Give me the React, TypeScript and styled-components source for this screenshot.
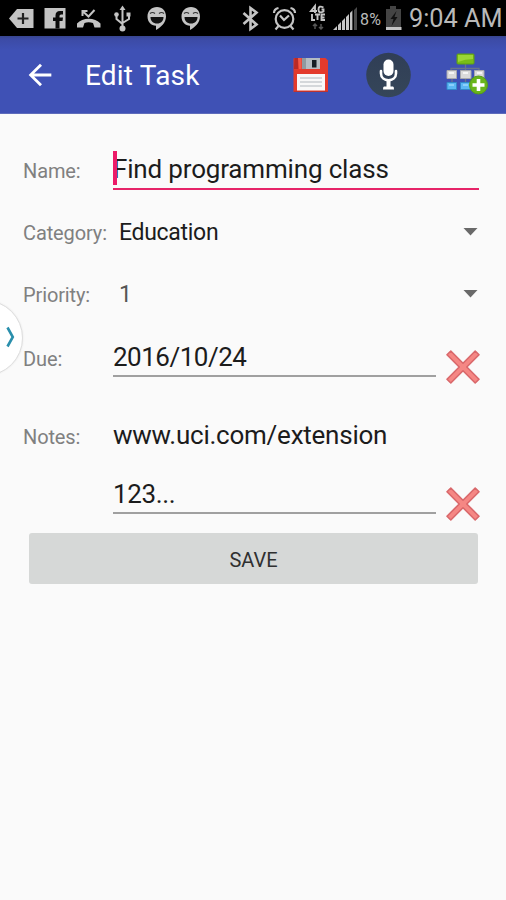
import React from "react";
import styled, { createGlobalStyle } from "styled-components";

const GlobalStyle = createGlobalStyle`
  * { box-sizing: border-box; }
  body { margin: 0; background: #fafafa; font-family: Roboto, sans-serif; }
`;

const Screen = styled.div`
  position: relative;
  width: 506px;
  height: 900px;
  overflow: hidden;
  background: #fafafa;
`;

const StatusBar = styled.div`
  display: flex;
  align-items: center;
  height: 36px;
  padding-left: 8px;
  background: #000;
  color: #b9b9b9;
`;

const StatusIcon = styled.svg<{ $gap?: number }>`
  flex: none;
  height: 36px;
  margin-left: ${(p) => p.$gap ?? 0}px;
  fill: #c4c4c4;
`;

const BatteryText = styled.span`
  width: 25px;
  margin-left: 2px;
  padding-top: 3px;
  font-size: 16px;
  letter-spacing: 0.3px;
  line-height: 20px;
`;

const Clock = styled.span`
  margin-left: 5px;
  padding-top: 2px;
  font-size: 25.3px;
  line-height: 36px;
  white-space: nowrap;
`;

const AppBar = styled.header`
  display: flex;
  align-items: center;
  height: 78px;
  padding: 0 17px 0 23px;
  background: linear-gradient(#38468f 0, #3c4ba6 3px, #3f51b5 14px);
  border-bottom: 1px solid #5e6cbb;
`;

const BackIcon = styled.svg`
  width: 34px;
  height: 34px;
  fill: #fff;
`;

const Title = styled.h1`
  flex: 1;
  margin: 0 0 0 28px;
  padding-top: 3px;
  color: #fff;
  font-size: 28px;
  font-weight: 400;
  letter-spacing: 0.2px;
  line-height: 36px;
`;

const Actions = styled.div`
  display: flex;
  align-items: center;
`;

const ActionIcon = styled.svg<{ $gap?: number }>`
  margin-left: ${(p) => p.$gap ?? 0}px;
`;

const Form = styled.form`
  display: flex;
  flex-direction: column;
  padding: 36px 26px 0 23px;
`;

const Row = styled.div<{ $gap?: number }>`
  display: grid;
  grid-template-columns: 90px 1fr auto;
  align-items: baseline;
  margin-top: ${(p) => p.$gap ?? 0}px;
`;

const Label = styled.label`
  color: #808080;
  font-size: 20px;
  letter-spacing: -0.12px;
  line-height: 24px;
  white-space: nowrap;
`;

const Field = styled.div<{ $active?: boolean }>`
  position: relative;
  margin-right: ${(p) => (p.$active ? 1 : 0)}px;
  margin-bottom: ${(p) => (p.$active ? 0 : 7)}px;
  border-bottom: 2px solid ${(p) => (p.$active ? "#e62468" : "#a0a0a0")};
  color: #1c1c1c;
  font-size: 26px;
  line-height: ${(p) => (p.$active ? 38 : 36)}px;
  white-space: nowrap;
`;

const Line = styled.div<{ $gap?: number; $spacing?: number }>`
  margin-top: ${(p) => p.$gap ?? 0}px;
  letter-spacing: ${(p) => p.$spacing ?? 0}px;
`;

const Caret = styled.span`
  position: absolute;
  left: 0;
  top: 1px;
  width: 4px;
  height: 34px;
  background: #ec1b68;
`;

const Select = styled.div<{ $muted?: boolean }>`
  display: flex;
  align-items: center;
  justify-content: space-between;
  padding: 0 2px 0 6px;
  color: ${(p) => (p.$muted ? "#555" : "#1c1c1c")};
  font-size: 23px;
  letter-spacing: -0.3px;
  line-height: 36px;
`;

const Arrow = styled.svg`
  width: 15px;
  height: 8px;
  margin-top: -3px;
  fill: #696969;
`;

const DeleteIcon = styled.svg`
  align-self: end;
  width: 34px;
  height: 34px;
  margin-left: 10px;
`;

const SaveButton = styled.button`
  height: 51px;
  margin: 12px 2px 0 6px;
  padding: 2px 0 0;
  border: 0;
  border-radius: 3px;
  background: #d6d8d7;
  color: #303030;
  font: 400 20px/24px Roboto, sans-serif;
`;

const EdgeHandle = styled.div`
  position: absolute;
  left: -53px;
  top: 300px;
  display: flex;
  align-items: center;
  justify-content: flex-end;
  width: 76px;
  height: 76px;
  padding-right: 7px;
  padding-bottom: 2px;
  border: 1px solid #dedede;
  border-radius: 50%;
  background: #fff;
  box-shadow: 0 0 2px #e4e4e4;
`;

const Smile = ({ gap }: { gap: number }) => (
  <StatusIcon $gap={gap} width="20" viewBox="0 0 20 36">
    <path d="M10 7C4.500 7 .500 11 .500 16.500S4 25.500 9 25.700V30c4.500-2.500 10-7 10-13.500C19 11 15.500 7 10 7Z" />
    <path d="M3.500 17h13c0 4-2.500 6.500-6.500 6.500S3.500 21 3.500 17Z" fill="#111" />
    <path d="M3 13.500q2.500-2 5 0M12 13.500q2.500-2 5 0" stroke="#333" strokeWidth="1.200" fill="none" />
  </StatusIcon>
);

const Delete = () => (
  <DeleteIcon viewBox="0 0 34 34">
    <path
      d="M4.800 1 17 13.200 29.200 1 33 4.800 20.800 17 33 29.200 29.200 33 17 20.800 4.800 33 1 29.200 13.200 17 1 4.800Z"
      fill="#f58784"
      stroke="#d9686b"
      strokeWidth="1.600"
      strokeLinejoin="round"
    />
  </DeleteIcon>
);

const DropArrow = () => (
  <Arrow viewBox="0 0 15 8">
    <path d="M.500 0h14l-7 7.500Z" />
  </Arrow>
);

const Status = () => (
  <StatusBar>
    <StatusIcon width="26" viewBox="8 0 26 36">
      <path d="M17 9h16.500v19H17L9 18.500Z" />
      <path d="M23 13v11M17.500 18.500h11" stroke="#222" strokeWidth="2.200" />
    </StatusIcon>
    <StatusIcon $gap={10} width="22" viewBox="44 0 22 36">
      <path d="M44.500 8h21v20.500h-21Z" />
      <path d="M55.500 28.500V21H53v-3.500h2.500v-2q0-4.500 4.500-4.500h3v3.500h-2q-1.500 0-1.500 1.500v1.500H63l-.5 3.500h-3v7.500Z" fill="#0c0c0c" />
    </StatusIcon>
    <StatusIcon $gap={10} width="26" viewBox="76 0 26 36">
      <path d="M77 27.500v-4c5.500-6.500 18-6.500 23.500 0v4h-6l-1.500-4.500q-4.500-1.500-8.500 0l-1.500 4.500Z" />
      <path d="M82.500 16v-5h5M83 11.500l5.500 5 6-6.500" fill="none" stroke="#c4c4c4" strokeWidth="2" />
    </StatusIcon>
    <StatusIcon $gap={11} width="20" viewBox="113 0 20 36">
      <path d="M122.500 5.500l3 4.500h-6Z" />
      <path d="M122.500 9v18M116.500 15v4l6 5M129 15v4l-6.500 4" fill="none" stroke="#c4c4c4" strokeWidth="2" />
      <circle cx="122.500" cy="28.500" r="3" />
      <circle cx="116.500" cy="14.500" r="2.300" />
      <path d="M126.500 12.500h4v4h-4z" />
    </StatusIcon>
    <Smile gap={14} />
    <Smile gap={14} />
    <StatusIcon $gap={40} width="20" viewBox="241 0 20 36">
      <path d="M243.500 13l13 11.500-6 4.500V8l6 4.500-13 11.500" fill="none" stroke="#c4c4c4" strokeWidth="2.600" />
    </StatusIcon>
    <StatusIcon $gap={11} width="26" viewBox="272 0 26 36">
      <g fill="none" stroke="#c4c4c4" strokeWidth="2.200">
        <circle cx="284.500" cy="19" r="8.800" />
        <path d="M280 15.500l4 4.500 5-4.500M278.500 26l-3 3.500M290.500 26l3 3.500M274 13q0-4 4.500-5M290.500 8q4.500 1 4.500 5" />
      </g>
    </StatusIcon>
    <StatusIcon $gap={11} width="18" viewBox="309 0 18 36">
      <g fill="none" stroke="#c4c4c4" strokeWidth="1.900">
        <path d="M315 13V6l-4 5h6M323.500 7.500q-5-2.500-5 2t5 2v-2h-2M312 14v6h3M315 14.500h5M317.500 14.500V20M325 14.500h-3.500V20h3.500M321.500 17.500h3" />
        <path d="M315 29v-5m-2 2 2-2 2 2M321 24v5m-2-2 2 2 2-2" stroke="#555" strokeWidth="1.500" />
      </g>
    </StatusIcon>
    <StatusIcon $gap={6} width="25" viewBox="333 0 25 36">
      <path d="M333 30l4-4v4ZM338 30v-5l3-3v8ZM342 30v-9l3-3v12ZM346 30V17l3-3v16Z" />
      <path d="M350 30V13l3-3v20ZM354 30V10l3-3v23Z" fill="#4b4b4b" />
      <path d="M350 30V13l2-2v19Z" />
    </StatusIcon>
    <BatteryText>8%</BatteryText>
    <StatusIcon width="19" viewBox="385 0 19 36">
      <path d="M386 9h4V6h6v3h5v18h-15Z" fill="#444" />
      <path d="M396.500 11l-6 8h3l-2 7 6-9h-3Z" fill="#111" />
      <path d="M386 27h15.500v3H386Z" />
    </StatusIcon>
    <Clock>9:04 AM</Clock>
  </StatusBar>
);

const App = () => (
  <Screen>
    <GlobalStyle />
    <Status />
    <AppBar>
      <BackIcon viewBox="0 0 24 24">
        <path d="M20 11H7.830l5.590-5.590L12 4l-8 8 8 8 1.410-1.410L7.830 13H20v-2z" />
      </BackIcon>
      <Title>Edit Task</Title>
      <Actions>
        <ActionIcon width="36" height="36" viewBox="0 0 36 36">
          <path d="M1.500 1h31L35 3.500V35H.500V2q0-1 1-1Z" fill="#e33a2c" />
          <path d="M1.500 1H5v11H1Z" fill="#b92a26" />
          <path d="M5 1h3.500v11H6Z" fill="#f25b4a" />
          <path d="M9 1h18v11H9Z" fill="#b4bcc2" />
          <path d="M9 1h4v11H9Z" fill="#8f999f" />
          <path d="M19 3h4.500v7.500H19Z" fill="#151d25" />
          <path d="M4 17h28v16.500H4Z" fill="#f8f8f8" />
          <path d="M7 21h22M7 25h22M7 29h22" stroke="#c8ccd0" strokeWidth="1.500" />
          <path d="M1 34.500h34" stroke="#bd332f" />
        </ActionIcon>
        <ActionIcon $gap={37} width="46" height="46" viewBox="0 0 46 46">
          <defs>
            <linearGradient id="disc" x2="0" y2="1">
              <stop stopColor="#303e56" />
              <stop offset="1" stopColor="#354659" />
            </linearGradient>
          </defs>
          <circle cx="22.500" cy="23" r="22.300" fill="url(#disc)" />
          <rect x="17.500" y="7.500" width="10" height="16.500" rx="5" fill="#fff" />
          <path d="M15 19v2.500c0 9 15 9 15 0V19" fill="none" stroke="#fff" strokeWidth="2.600" strokeLinecap="round" />
          <path d="M20.500 27h4v7.500H27q1 0 1 3H17q0-3 1-3h2.500Z" fill="#fff" />
        </ActionIcon>
        <ActionIcon $gap={33} width="44" height="44" viewBox="0 0 44 44">
          <path d="M20.500 11v6M6 17v-1.500h28V17M7 25v6M20.500 25v6" fill="none" stroke="#68738f" strokeWidth="1.300" />
          <rect x="12" y="1" width="17" height="10" rx="1" fill="#79bd18" stroke="#5fa112" />
          <path d="M13 2h15v4q-8 0-15 3Z" fill="#9bd636" />
          <g fill="#dadada" stroke="#a8a9ae">
            <path d="M2 17.500h9.500v8H2ZM15.500 17.500h10.500v8H15.500ZM29.500 17.500H39v8h-9.500Z" />
          </g>
          <g fill="#5cb8f4" stroke="#3289c9">
            <path d="M2 29.500h9.500v7H2ZM15.500 29.500h10.500v7H15.500Z" />
          </g>
          <path d="M4 20h5M18 20h5M32 20h5" stroke="#f5f5f5" strokeWidth="2" />
          <path d="M4 32h5M18 32h5" stroke="#8bd0fb" strokeWidth="2" />
          <circle cx="33.500" cy="32" r="9" fill="#68b51a" stroke="#559d18" />
          <path d="M33.500 26v12M27.500 32h12" stroke="#fff" strokeWidth="3.600" />
        </ActionIcon>
      </Actions>
    </AppBar>
    <Form>
      <Row>
        <Label>Name:</Label>
        <Field $active>
          <Caret />
          <Line $spacing={-0.17}>Find programming class</Line>
        </Field>
      </Row>
      <Row $gap={25}>
        <Label>Category:</Label>
        <Select>
          Education
          <DropArrow />
        </Select>
      </Row>
      <Row $gap={26}>
        <Label>Priority:</Label>
        <Select $muted>
          1
          <DropArrow />
        </Select>
      </Row>
      <Row $gap={26}>
        <Label>Due:</Label>
        <Field>
          <Line $spacing={-0.5}>2016/10/24</Line>
        </Field>
        <Delete />
      </Row>
      <Row $gap={33}>
        <Label>Notes:</Label>
        <Field>
          <Line $spacing={-0.24}>www.uci.com/extension</Line>
          <Line $gap={23} $spacing={-0.35}>123...</Line>
        </Field>
        <Delete />
      </Row>
      <SaveButton type="button">SAVE</SaveButton>
    </Form>
    <EdgeHandle>
      <svg width="9" height="22" viewBox="0 0 9 22">
        <path d="M1.500 1.500 6.800 11 1.500 20.500" fill="none" stroke="#2a8fac" strokeWidth="2.600" />
      </svg>
    </EdgeHandle>
  </Screen>
);

export default App;
